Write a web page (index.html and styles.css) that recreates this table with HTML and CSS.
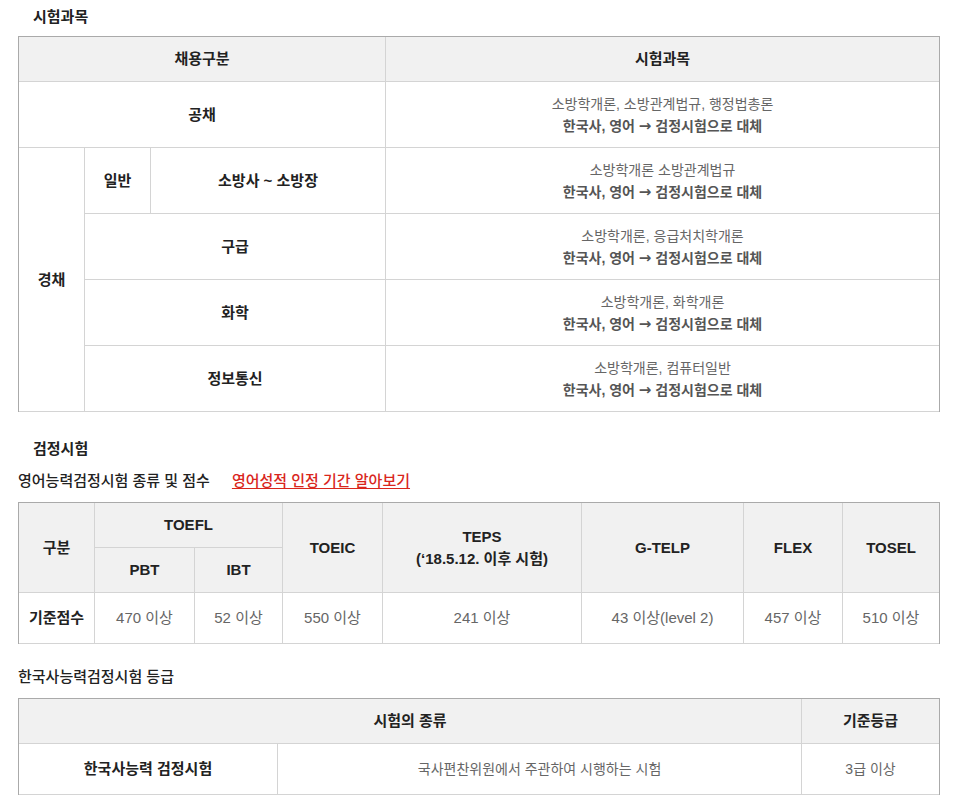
FILE: index.html
```html
<!DOCTYPE html>
<html lang="ko">
<head>
<meta charset="utf-8">
<link rel="stylesheet" href="styles.css">
</head>
<body>
<div class="page">
  <h3 class="title">시험과목</h3>
  <table class="tbl t1">
    <colgroup><col class="c66"><col class="c66"><col class="c235"><col></colgroup>
    <thead>
      <tr><th colspan="3">채용구분</th><th class="last">시험과목</th></tr>
    </thead>
    <tbody>
      <tr><th colspan="3" class="plain">공채</th><td class="last">소방학개론, 소방관계법규, 행정법총론<br><strong>한국사, 영어 <span class="arr">→</span> 검정시험으로 대체</strong></td></tr>
      <tr><th rowspan="4" class="plain">경채</th><th class="plain">일반</th><th class="plain">소방사 ~ 소방장</th><td class="last">소방학개론 소방관계법규<br><strong>한국사, 영어 <span class="arr">→</span> 검정시험으로 대체</strong></td></tr>
      <tr><th colspan="2" class="plain">구급</th><td class="last">소방학개론, 응급처치학개론<br><strong>한국사, 영어 <span class="arr">→</span> 검정시험으로 대체</strong></td></tr>
      <tr><th colspan="2" class="plain">화학</th><td class="last">소방학개론, 화학개론<br><strong>한국사, 영어 <span class="arr">→</span> 검정시험으로 대체</strong></td></tr>
      <tr><th colspan="2" class="plain">정보통신</th><td class="last">소방학개론, 컴퓨터일반<br><strong>한국사, 영어 <span class="arr">→</span> 검정시험으로 대체</strong></td></tr>
    </tbody>
  </table>

  <h3 class="title title-2">검정시험</h3>
  <div class="sub">
    <span class="sub-text">영어능력검정시험 종류 및 점수</span>
    <a class="sub-link" href="#">영어성적 인정 기간 알아보기</a>
  </div>
  <table class="tbl t2">
    <colgroup><col class="w76"><col class="w100"><col class="w88"><col class="w100"><col class="w199"><col class="w162"><col class="w99"><col></colgroup>
    <thead>
      <tr>
        <th rowspan="2">구분</th>
        <th colspan="2">TOEFL</th>
        <th rowspan="2">TOEIC</th>
        <th rowspan="2">TEPS<br>(‘18.5.12. 이후 시험)</th>
        <th rowspan="2">G-TELP</th>
        <th rowspan="2">FLEX</th>
        <th rowspan="2" class="last">TOSEL</th>
      </tr>
      <tr><th>PBT</th><th>IBT</th></tr>
    </thead>
    <tbody>
      <tr>
        <th class="plain">기준점수</th>
        <td>470 이상</td><td>52 이상</td><td>550 이상</td><td>241 이상</td><td>43 이상(level 2)</td><td>457 이상</td><td class="last">510 이상</td>
      </tr>
    </tbody>
  </table>

  <div class="sub sub-3"><span class="sub-text">한국사능력검정시험 등급</span></div>
  <table class="tbl t3">
    <colgroup><col class="w259"><col class="w524"><col></colgroup>
    <thead>
      <tr><th colspan="2">시험의 종류</th><th class="last">기준등급</th></tr>
    </thead>
    <tbody>
      <tr><th class="plain">한국사능력 검정시험</th><td>국사편찬위원에서 주관하여 시행하는 시험</td><td class="last">3급 이상</td></tr>
    </tbody>
  </table>
</div>
</body>
</html>
```

FILE: styles.css
```css
* { box-sizing: border-box; }
html, body { margin: 0; padding: 0; background: #fff; }
body {
  font-family: "Liberation Sans", "Noto Sans CJK KR", sans-serif;
  font-size: 14px;
  color: #333;
}
.page { width: 922px; margin-left: 18px; }

.title {
  margin: 6px 0 8px;
  padding-left: 15px;
  font-size: 15px;
  line-height: 22px;
  font-weight: 700;
  color: #222;
}
.title-2 { margin-top: 26px; margin-bottom: 8px; }

.sub {
  display: flex;
  align-items: center;
  gap: 22px;
  height: 22px;
  margin-bottom: 12px;
}
.sub-3 { margin-top: 20px; }
.sub-text { font-size: 15px; font-weight: 500; color: #222; }
.sub-link {
  font-size: 15px;
  font-weight: 500;
  color: #d9261c;
  text-decoration: underline;
  text-underline-offset: 2px;
}

.tbl {
  width: 922px;
  border-collapse: separate;
  border-spacing: 0;
  table-layout: fixed;
  border-top: 1px solid #aaa;
  border-left: 1px solid #aaa;
  border-right: 1px solid #aaa;
}
.tbl th, .tbl td {
  border-right: 1px solid #d4d4d4;
  border-bottom: 1px solid #d4d4d4;
  text-align: center;
  vertical-align: middle;
  line-height: 22px;
  padding: 11px 8px;
}
.tbl .last { border-right: 0; }
.tbl th { font-size: 15px; }
.tbl thead th {
  background: #f1f1f1;
  font-weight: 700;
  color: #222;
}
.tbl th.plain { background: #fff; font-weight: 700; color: #222; }
.tbl td { color: #666; font-weight: 400; font-size: 14px; }
.tbl td strong { color: #555; font-weight: 700; }
.arr { font-family: "DejaVu Sans", sans-serif; font-size: 15px; font-weight: 700; line-height: 1; }

.t1 tbody th, .t1 tbody td { padding-top: 10.5px; padding-bottom: 10.5px; }
.c66 { width: 66px; }
.c235 { width: 235px; }

.t2 td { font-size: 15px; }
.t2 tbody th, .t2 tbody td, .t3 tbody th, .t3 tbody td { padding-top: 14px; padding-bottom: 14px; }
.w76 { width: 76px; }
.w100 { width: 100px; }
.w88 { width: 88px; }
.w199 { width: 199px; }
.w162 { width: 162px; }
.w99 { width: 99px; }
.w259 { width: 259px; }
.w524 { width: 524px; }
```
